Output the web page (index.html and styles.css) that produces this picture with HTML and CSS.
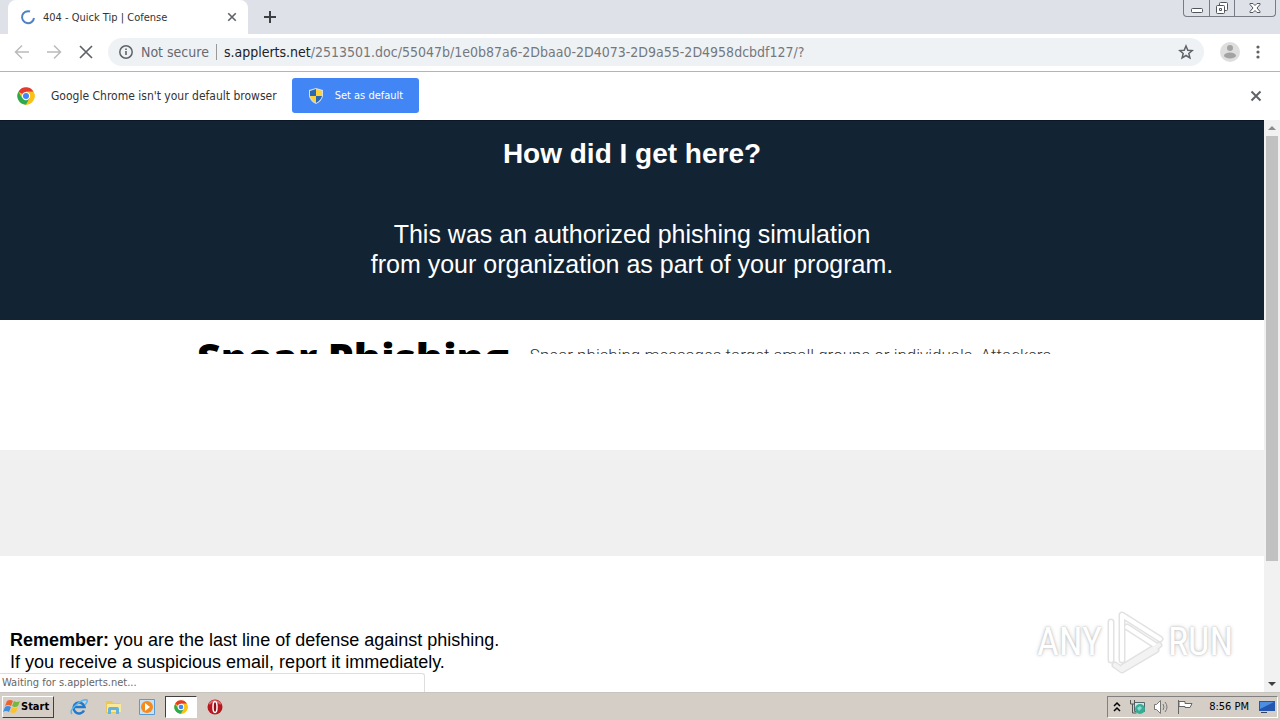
FILE: index.html
```html
<!DOCTYPE html>
<html lang="en">
  <head>
    <meta charset="utf-8" />
    <meta name="viewport" content="width=device-width, initial-scale=1.0" />
    <title>404 - Quick Tip | Cofense</title>
    <link rel="stylesheet" href="styles.css">
  </head>
  <body>
    <svg width="0" height="0" class="defs" aria-hidden="true">
      <symbol id="chrome" viewBox="0 0 48 48">
        <circle cx="24" cy="24" r="23" fill="#fbc116" />
        <path d="M24 24L4 12.500A23 23 0 0 1 44 12.500H24z" fill="#e33b2e" />
        <path d="M4 12.500A23 23 0 0 0 24 47L34 30 24 24 14 30z" fill="#2da94f" />
        <path d="M44 12.500A23 23 0 0 1 24 47L34 30 24 12.500z" fill="#fbc116" />
        <circle cx="24" cy="24" r="11" fill="#fff" />
        <circle cx="24" cy="24" r="8" fill="#4285f4" />
      </symbol>
      <symbol id="cross" viewBox="0 0 12 12">
        <path d="M1.500 1.500l9 9M10.500 1.500l-9 9" fill="none" stroke="currentColor" stroke-width="2" />
      </symbol>
    </svg>

    <header class="tabstrip">
      <div class="tab">
        <svg class="spinner" width="16" height="16" viewBox="0 0 16 16"><path d="M10 2.500A6 6 0 1 0 14 9" fill="none" stroke="#4f82c4" stroke-width="2" /></svg>
        <span class="tab-title">404 - Quick Tip | Cofense</span>
        <button class="icon-btn" aria-label="Close tab"><svg width="10" height="10"><use href="#cross" /></svg></button>
      </div>
      <button class="icon-btn new-tab" aria-label="New tab">
        <svg width="14" height="14" viewBox="0 0 14 14"><path d="M7 1v12M1 7h12" stroke="#3c4043" stroke-width="2" /></svg>
      </button>
      <div class="window-buttons">
        <button aria-label="Minimize"><svg width="14" height="16" viewBox="0 0 14 16"><rect x="1.500" y="8.500" width="11" height="4" rx="1" fill="#fff" stroke="#50545e" /></svg></button>
        <button aria-label="Restore"><svg width="14" height="16" viewBox="0 0 14 16"><g fill="#fff" stroke="#50545e"><rect x="4.500" y="2.500" width="8" height="8" rx="1" /><rect x="1.500" y="5.500" width="8" height="8" rx="1" /><path d="M4.500 8.500h2v2h-2z" /></g></svg></button>
        <button class="wide" aria-label="Close"><svg width="14" height="16" viewBox="0 0 14 16"><path d="M2 3.500h3l2 2 2-2h3v1L9 8l3 3.500v1H9l-2-2-2 2H2v-1L5 8 2 4.500z" fill="#fff" stroke="#50545e" /></svg></button>
      </div>
    </header>

    <nav class="toolbar">
      <button class="icon-btn faded" aria-label="Back"><svg width="16" height="16" viewBox="0 0 16 16"><path d="M15 8H2M8 1.500L1.500 8 8 14.500" fill="none" stroke="currentColor" stroke-width="1.500" /></svg></button>
      <button class="icon-btn faded" aria-label="Forward"><svg width="16" height="16" viewBox="0 0 16 16"><path d="M1 8h13M8 1.500L14.500 8 8 14.500" fill="none" stroke="currentColor" stroke-width="1.500" /></svg></button>
      <button class="icon-btn" aria-label="Stop"><svg width="16" height="16" viewBox="0 0 16 16"><path d="M2 2l12 12M14 2L2 14" stroke="#5f6368" stroke-width="1.700" /></svg></button>
      <div class="omnibox">
        <svg width="16" height="16" viewBox="0 0 16 16"><circle cx="8" cy="8" r="6.200" fill="none" stroke="#5f6368" stroke-width="1.500" /><path d="M8 7v4M8 4.500V6" stroke="#5f6368" stroke-width="1.600" /></svg>
        <span class="secure">Not secure</span>
        <a class="url" href="#"><b>s.applerts.net</b>/2513501.doc/55047b/1e0b87a6-2Dbaa0-2D4073-2D9a55-2D4958dcbdf127/?</a>
        <button class="icon-btn" aria-label="Bookmark this page"><svg width="16" height="16" viewBox="0 0 16 16"><path d="M8 2l1.800 4.200 4.400.4-3.400 2.900 1.100 4.400L8 11.500l-3.900 2.400 1.100-4.400-3.400-2.900 4.400-.4z" fill="none" stroke="#5f6368" stroke-width="1.500" /></svg></button>
      </div>
      <button class="icon-btn profile" aria-label="Profile"><svg width="20" height="20" viewBox="0 0 20 20"><circle cx="10" cy="10" r="10" fill="#dedede" /><circle cx="10" cy="6" r="3" fill="#a3a3a3" /><ellipse cx="10" cy="13.500" rx="6" ry="3" fill="#a3a3a3" /></svg></button>
      <button class="icon-btn" aria-label="Menu"><svg width="4" height="14" viewBox="0 0 4 14" fill="#5f6368"><circle cx="2" cy="2" r="1.600" /><circle cx="2" cy="7" r="1.600" /><circle cx="2" cy="12" r="1.600" /></svg></button>
    </nav>

    <div class="infobar">
      <svg width="18" height="18"><use href="#chrome" /></svg>
      <span class="info-text">Google Chrome isn't your default browser</span>
      <button class="set-default">
        <svg width="14" height="16" viewBox="0 0 14 16"><path d="M7 0l7 2v6q-1 5-7 8-6-3-7-8V2z" fill="#d8dde2" /><path d="M7 1v7H1V3z" fill="#2c68b2" /><path d="M7 1l6 2v5H7z" fill="#fbd237" /><path d="M1 8h6v7Q2 12 1 8z" fill="#fbd237" /><path d="M7 8h6q-1 4-6 7z" fill="#2c68b2" /></svg>
        Set as default
      </button>
      <button class="icon-btn dismiss" aria-label="Dismiss"><svg width="12" height="12"><use href="#cross" /></svg></button>
    </div>

    <div class="viewport">
      <main class="page">
        <section class="hero">
          <h1>How did I get here?</h1>
          <p>This was an authorized phishing simulation<br />from your organization as part of your program.</p>
        </section>
        <section class="tip">
          <div class="tip-image">
            <h2>Spear Phishing</h2>
            <p>Spear phishing messages target small groups or individuals. Attackers</p>
          </div>
        </section>
        <section class="band"></section>
        <section class="remember">
          <p><b>Remember:</b> you are the last line of defense against phishing.<br />If you receive a suspicious email, report it immediately.</p>
        </section>
      </main>
      <div class="scrollbar">
        <svg width="16" height="16" viewBox="0 0 16 16"><path d="M4 10l4-4 4 4z" fill="#8b8b8b" /></svg>
        <div class="thumb"></div>
        <svg width="16" height="16" viewBox="0 0 16 16"><path d="M4 6l4 4 4-4z" fill="#404040" /></svg>
      </div>
      <div class="status">Waiting for s.applerts.net...</div>
      <div class="watermark">
        <span>ANY</span>
        <svg width="60" height="64" viewBox="0 0 60 64" fill="none" stroke-linejoin="round" stroke-linecap="round">
          <g stroke="#e2e2e2" stroke-width="7"><path d="M17 50V5L55 29M22 17L50 35M54 35L18 57M6 50V12M10 55l7 5 34-20" /></g>
          <g stroke="#fff" stroke-width="4"><path d="M17 50V5L55 29M22 17L50 35M6 50V12" /></g>
          <g stroke="#f3f3f3" stroke-width="4"><path d="M54 35L18 57M10 55l7 5 34-20" /></g>
        </svg>
        <span>RUN</span>
      </div>
    </div>

    <footer class="taskbar">
      <button class="start">
        <svg width="18" height="16" viewBox="0 0 18 16"><path d="M4 2q3-2 6 0L8 7Q5 5 2 7z" fill="#ee6230" /><path d="M11 2q3 2 6 0l-2 5q-3 2-6 0z" fill="#76b83f" /><path d="M2 8q3-2 6 0l-2 5q-3-2-6 0z" fill="#3f8de0" /><path d="M9 8q3 2 6 0l-2 5q-3 2-6 0z" fill="#fac32d" /></svg>
        Start
      </button>
      <div class="quick">
        <button aria-label="Internet Explorer"><svg width="18" height="18" viewBox="0 0 18 18" fill="none"><path d="M14 12.500A5.500 5.500 0 1 1 14.500 9H5" stroke="#2179ce" stroke-width="2.500" /><path d="M2 16Q-1 13 6 7T17 2q1 2-2 5" stroke="#55b5ef" stroke-width="1.500" /></svg></button>
        <button aria-label="Explorer"><svg width="18" height="18" viewBox="0 0 18 18"><path d="M2 3h6l1 2h7v10H2z" fill="#e9c75b" /><path d="M3 6h14v8H3z" fill="#fae99c" /><path d="M4 16v-5q0-2 2-2h7q2 0 2 2v5h-3v-4H7v4z" fill="#61b4dc" /></svg></button>
        <button aria-label="Media Player"><svg width="18" height="18" viewBox="0 0 18 18"><path d="M1.500 1.500h15v15h-15z" fill="#c9e1f4" stroke="#5b9bd5" /><circle cx="9" cy="9" r="6" fill="#f58a1d" /><path d="M7 5l5 4-5 4z" fill="#fff" /></svg></button>
        <button class="pressed" aria-label="Chrome"><svg width="14" height="14"><use href="#chrome" /></svg></button>
        <button aria-label="Opera"><svg width="16" height="16" viewBox="0 0 16 16"><circle cx="8" cy="8" r="7.500" fill="#b71820" /><path d="M2 5q5-6 12 0" fill="none" stroke="#df6668" stroke-width="2" /><ellipse cx="8" cy="8" rx="2" ry="5.500" fill="#8e1117" stroke="#fff" stroke-width="1.500" /></svg></button>
      </div>
      <div class="tray">
        <svg width="8" height="12" viewBox="0 0 8 12"><path d="M1 5l3-3 3 3M1 10l3-3 3 3" fill="none" stroke="#000" stroke-width="1.500" /></svg>
        <svg width="16" height="16" viewBox="0 0 16 16"><path d="M5.500 3.500h10v9h-10z" fill="#d9e5e5" stroke="#53666b" /><path d="M1.500 1v4h4V1M3.500 5v9h4" fill="none" stroke="#555" /><circle cx="11" cy="10" r="5" fill="#36ad94" /><path d="M8 9l3-2 2 2-3 3z" fill="#8bdbd0" /></svg>
        <svg width="16" height="16" viewBox="0 0 16 16" fill="none" stroke="#777"><path d="M1.500 5.500h2l4-4v13l-4-4h-2z" fill="#fff" /><path d="M10 5q2 3 0 6M12 3q4 5 0 10" /></svg>
        <svg width="16" height="16" viewBox="0 0 16 16" fill="#fff" stroke="#666"><path d="M1.500 1v14M2 2.500h6v2h7l-2 4h-5v-1H2z" /></svg>
        <time>8:56 PM</time>
        <svg width="16" height="14" viewBox="0 0 16 14"><path d="M0 1h16v10H0z" fill="#2456b0" /><path d="M1 2h14L1 9z" fill="#4c8fe2" /><path d="M2 12h6v1H2z" fill="#32435c" /></svg>
      </div>
    </footer>
  </body>
</html>
```

FILE: styles.css
```css
* {
  box-sizing: border-box;
}

body {
  display: flex;
  flex-direction: column;
  height: 100vh;
  margin: 0;
  overflow: hidden;
  background: #fff;
  color: #333;
  font-family: "DejaVu Sans Condensed", "Noto Sans", sans-serif;
  font-size: 11px;
}

h1,
h2,
p {
  margin: 0;
}

svg {
  display: block;
  flex: none;
}

button {
  margin: 0;
  padding: 0;
  border: 0;
  background: none;
  font: inherit;
}

.defs {
  position: absolute;
}

.icon-btn {
  display: flex;
  flex: none;
  color: #5f6368;
}

.faded {
  color: #bbb;
}

/* browser frame */
.tabstrip {
  display: flex;
  flex: none;
  align-items: center;
  height: 34px;
  padding-left: 8px;
  background: #dee1e8;
}

.tab {
  display: flex;
  align-items: center;
  gap: 7px;
  width: 240px;
  height: 34px;
  padding: 0 11px 0 12px;
  border-radius: 8px 8px 0 0;
  background: #fff;
}

.tab-title {
  flex: 1;
}

.new-tab {
  margin-left: 15px;
}

.window-buttons {
  display: flex;
  align-self: flex-start;
  margin: 0 4px 0 auto;
  border: 1px solid #777b85;
  border-top: 0;
  border-radius: 0 0 4px 4px;
}

.window-buttons button {
  display: flex;
  justify-content: center;
  width: 25px;
}

.window-buttons button + button {
  border-left: 1px solid #777b85;
}

.window-buttons .wide {
  width: 41px;
}

.toolbar {
  display: flex;
  flex: none;
  align-items: center;
  gap: 16px;
  height: 38px;
  padding: 0 20px 2px 14px;
  border-bottom: 1px solid #b4b4b4;
}

.omnibox {
  display: flex;
  flex: 1;
  align-items: center;
  gap: 7px;
  height: 28px;
  margin-left: -2px;
  padding: 0 10px;
  border-radius: 14px;
  background: #eff2f5;
  font-size: 14px;
}

.secure {
  padding-right: 7px;
  border-right: 1px solid #999;
  color: #666a6f;
  line-height: 16px;
}

.url {
  flex: 1;
  color: #74787d;
  text-decoration: none;
  white-space: nowrap;
}

.url b {
  color: #202124;
  font-weight: 400;
}

.infobar {
  display: flex;
  flex: none;
  align-items: center;
  height: 48px;
  padding: 0 18px 1px 17px;
}

.info-text {
  margin: 0 15px 0 16px;
  font-size: 12px;
}

.set-default {
  display: flex;
  align-items: center;
  gap: 12px;
  height: 35px;
  padding: 0 16px 0 17px;
  border-radius: 3px;
  background: #4285f4;
  color: #fff;
}

.dismiss {
  margin-left: auto;
}

/* web page */
.viewport {
  position: relative;
  display: flex;
  flex: 1;
  min-height: 0;
}

.page {
  flex: 1;
  overflow: hidden;
  color: #000;
  font-family: "Liberation Sans", Arial, sans-serif;
}

.hero {
  height: 200px;
  padding-top: 17px;
  border-top: 1px solid #0b1724;
  background: #122333;
  color: #fff;
  text-align: center;
}

.hero h1 {
  font-size: 28px;
  line-height: 32px;
}

.hero p {
  margin-top: 49px;
  font-size: 25px;
  line-height: 30px;
}

.tip {
  height: 130px;
  padding-top: 10px;
}

.tip-image {
  display: flex;
  gap: 21px;
  width: 870px;
  height: 24px;
  margin: 0 auto;
  overflow: hidden;
  font-family: "Open Sans", sans-serif;
  white-space: nowrap;
}

.tip-image h2 {
  font-size: 41px;
  font-weight: 800;
  line-height: 54px;
}

.tip-image p {
  color: #333;
  font-family: Roboto, sans-serif;
  font-size: 17px;
  font-weight: 300;
  line-height: 50px;
}

.band {
  height: 106px;
  background: #f0f0f0;
}

.remember {
  padding: 73px 10px 0;
  font-size: 18px;
  line-height: 22px;
}

.scrollbar {
  display: flex;
  flex-direction: column;
  justify-content: space-between;
  width: 16px;
  background: #f1f1f1;
}

.thumb {
  flex: 1;
  margin: 0 2px 115px;
  background: #c1c1c1;
}

.status {
  position: absolute;
  bottom: 0;
  left: 0;
  width: 425px;
  height: 19px;
  padding-left: 2px;
  border: 1px solid #dedede;
  border-width: 1px 1px 0 0;
  border-radius: 0 3px 0 0;
  background: #fff;
  color: #666;
  line-height: 18px;
}

.watermark {
  position: absolute;
  right: 47px;
  bottom: 18px;
  display: flex;
  align-items: center;
  gap: 3px;
  color: #fff;
  font-family: "Roboto Condensed", "Liberation Sans Narrow", Roboto, sans-serif;
  font-size: 38px;
  text-shadow: 0 0 2px #bbb, 0 0 4px #ccc;
}

/* desktop */
.taskbar {
  display: flex;
  flex: none;
  align-items: center;
  height: 28px;
  padding: 0 2px;
  border-top: 1px solid #c8c5be;
  background: #d5cec6;
  color: #000;
}

.start {
  display: flex;
  align-items: center;
  gap: 0;
  width: 52px;
  height: 22px;
  border: 1px solid;
  border-color: #fff #404040 #404040 #fff;
  font-weight: 700;
}

.quick {
  display: flex;
  margin-left: 9px;
  gap: 2px;
}

.quick button {
  display: flex;
  align-items: center;
  justify-content: center;
  width: 32px;
  height: 22px;
}

.quick .pressed {
  border: 1px solid;
  border-color: #404040 #fff #fff #404040;
  background: #fff;
}

.tray {
  display: flex;
  align-items: center;
  gap: 8px;
  height: 22px;
  margin-left: auto;
  padding: 0 2px 0 5px;
  border: 1px solid;
  border-color: #808080 #fff #fff #808080;
}

.tray time {
  margin: 0 2px 0 8px;
}
```
